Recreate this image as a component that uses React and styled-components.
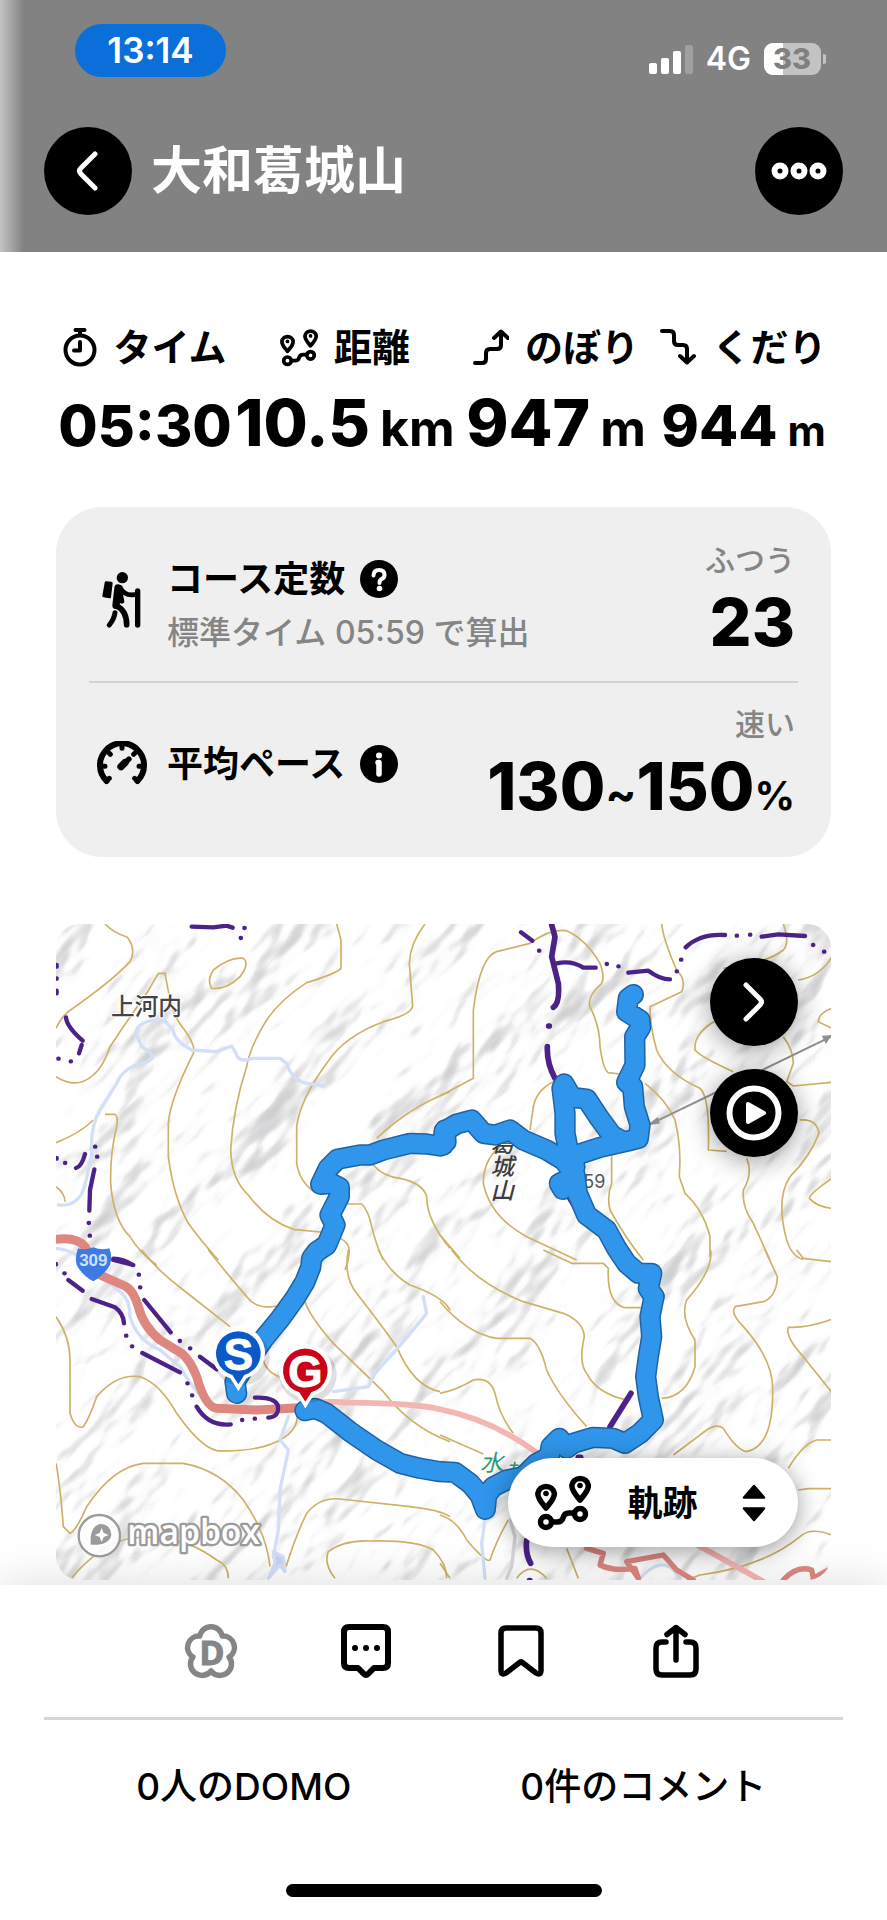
import React from "react";
import styled, { createGlobalStyle } from "styled-components";

const GlobalStyle = createGlobalStyle`
  *, *::before, *::after { box-sizing: border-box; }
  body {
    margin: 0;
    background: #fff;
    color: #000;
    font-family: Inter, "Noto Sans CJK JP", sans-serif;
  }
  button, select { font: inherit; color: inherit; border: 0; padding: 0; background: none; cursor: pointer; }
  svg { display: block; flex: none; }
`;

const Page = styled.div`
  min-height: 100vh;
  display: flex;
  flex-direction: column;
`;

/* ---------- header ---------- */

const Header = styled.header`
  padding: 24px 44px 37px;
  color: #fff;
  background: linear-gradient(90deg, #c4c4c4 0, #828282 24px);
`;

const StatusBar = styled.div`
  display: flex;
  justify-content: space-between;
  align-items: flex-start;
  padding: 0 17px 0 31px;
`;

const Clock = styled.time`
  width: 151px;
  border-radius: 27px;
  background: #0b6fd9;
  text-align: center;
  font-size: 35px;
  font-weight: 600;
  line-height: 53px;
`;

const Signals = styled.div`
  display: flex;
  align-items: center;
  gap: 13px;
  padding-top: 19px;
  font-size: 32px;
  font-weight: 600;
  line-height: 32px;
`;

const NavBar = styled.nav`
  display: flex;
  align-items: center;
  gap: 19px;
  margin-top: 50px;
`;

const Title = styled.h1`
  flex: 1;
  margin: 0;
  font-size: 51px;
  font-weight: 700;
  line-height: 64px;
`;

const RoundButton = styled.button`
  display: grid;
  place-items: center;
  width: 88px;
  height: 88px;
  border-radius: 50%;
  background: #000;
  box-shadow: ${(p) => (p.$raised ? "0 4px 26px rgba(0, 0, 0, 0.4)" : "none")};
`;

/* ---------- totals ---------- */

const Totals = styled.dl`
  display: grid;
  grid-template-columns: 178fr 222fr 200fr 175fr;
  margin: 0 56px;
  padding: 75px 0 52px;
`;

const Total = styled.div`
  display: flex;
  flex-direction: column;
  align-items: center;
  gap: 24px;
  min-width: 0;
  white-space: nowrap;
`;

const TotalLabel = styled.dt`
  display: flex;
  align-items: center;
  gap: 16px;
  font-size: 38px;
  font-weight: 700;
  line-height: 40px;
`;

const TotalValue = styled.dd`
  margin: 0;
  font-size: 64px;
  font-weight: 800;
  line-height: 64px;
`;

const Figure = styled.span`
  font-size: ${(p) => (p.$small ? 57 : 64)}px;
  line-height: 1;
`;

const Unit = styled.span`
  margin-left: 10px;
  font-size: ${(p) => (p.$small ? 42 : 50)}px;
  font-weight: 700;
  line-height: 1;
`;

/* ---------- rating card ---------- */

const Card = styled.section`
  margin: 0 56px;
  padding: 12px 33px;
  border-radius: 46px;
  background: #efefef;
`;

const Rating = styled.div`
  display: flex;
  align-items: center;
  min-height: 162px;
  & + & { border-top: 2px solid #d2d2d2; min-height: 164px; }
`;

const RatingIcon = styled.div`
  display: grid;
  place-items: center;
  width: 66px;
  margin-right: 12px;
`;

const RatingText = styled.div`
  flex: 1;
  padding-top: ${(p) => (p.$lower ? 12 : 0)}px;
`;

const RatingTitle = styled.h2`
  display: flex;
  align-items: center;
  gap: 15px;
  margin: 0;
  font-size: 36px;
  font-weight: 700;
  line-height: 44px;
`;

const HelpButton = styled.button`
  display: block;
  border-radius: 50%;
`;

const RatingNote = styled.p`
  margin: 10px 0 0;
  color: #858585;
  font-size: 32px;
  font-weight: 500;
  line-height: 44px;
`;

const RatingScore = styled.div`
  display: flex;
  flex-direction: column;
  align-items: flex-end;
  gap: 10px;
  padding: 0 3px 6px 0;
`;

const Grade = styled.span`
  color: #858585;
  font-size: 30px;
  font-weight: 500;
  line-height: 40px;
`;

const Score = styled.strong`
  font-size: 66px;
  font-weight: 800;
  line-height: 64px;
`;

const Small = styled.span`
  font-size: ${(p) => p.$size}px;
  font-weight: 700;
  line-height: 1;
`;

/* ---------- map ---------- */

const MapFrame = styled.section`
  position: relative;
  margin: 67px 56px 5px;
  border-radius: 24px;
  overflow: hidden;
`;

const MapDrawing = styled.svg`
  width: 100%;
  height: auto;
`;

const MapButtons = styled.div`
  position: absolute;
  top: 34px;
  right: 33px;
  display: grid;
  gap: 23px;
  color: #fff;
`;

const LayerPicker = styled.label`
  position: absolute;
  right: 33px;
  bottom: 33px;
  display: flex;
  align-items: center;
  justify-content: space-between;
  width: 290px;
  height: 89px;
  padding: 0 32px 0 27px;
  border-radius: 45px;
  background: #fff;
  box-shadow: 0 4px 24px rgba(0, 0, 0, 0.4);
`;

const LayerSelect = styled.select`
  appearance: none;
  width: 78px;
  height: 60px;
  font-size: 35px;
  font-weight: 700;
  line-height: 60px;
`;

/* ---------- bottom dock ---------- */

const Dock = styled.footer`
  position: relative;
  flex: 1;
  background: #fff;
  box-shadow: 0 0 44px rgba(0, 0, 0, 0.14);
`;

const Actions = styled.div`
  display: grid;
  grid-template-columns: repeat(4, 1fr);
  padding: 0 15%;
`;

const Action = styled.button`
  display: grid;
  place-items: center;
  height: 132px;
`;

const Counts = styled.div`
  display: grid;
  grid-template-columns: 1fr 1fr;
  margin: 0 44px;
  border-top: 3px solid #d6d6d6;
`;

const Count = styled.button`
  height: 134px;
  font-size: 37px;
  font-weight: 500;
  line-height: 40px;
`;

const HomeBar = styled.div`
  width: 316px;
  height: 13px;
  margin: 30px auto 22px;
  border-radius: 7px;
  background: #000;
`;

/* ---------- icons ---------- */

const SignalIcon = () => (
  <svg width="44" height="29" viewBox="0 0 44 29" fill="#fff">
    <rect x="0" y="18" width="8" height="11" rx="2" />
    <rect x="12" y="13" width="8" height="16" rx="2" />
    <rect x="24" y="6" width="8" height="23" rx="2" />
    <rect x="36" y="0" width="8" height="29" rx="2" fill="#a0a0a0" />
  </svg>
);

const BatteryIcon = () => (
  <svg width="62" height="32" viewBox="0 0 62 32">
    <rect x="0" y="0" width="57" height="32" rx="9" fill="#c3c3c3" />
    <path d="M9 0H19V32H9A9 9 0 0 1 0 23V9A9 9 0 0 1 9 0Z" fill="#fff" />
    <path d="M59 11A5 5 0 0 1 59 21Z" fill="#c3c3c3" />
    <text x="28" y="26" textAnchor="middle" fill="#808080" fontSize="29" fontWeight="800">33</text>
  </svg>
);

const ChevronIcon = ({ left }) => (
  <svg width="24" height="42" viewBox="0 0 24 42" fill="none" stroke="#fff" strokeWidth="5" strokeLinecap="round" strokeLinejoin="round">
    <path d={left ? "M19 4L5 18Q2 21 5 24L19 38" : "M4 4L18 18Q21 21 18 24L4 38"} />
  </svg>
);

const MoreIcon = () => (
  <svg width="56" height="18" viewBox="0 0 56 18" fill="none" stroke="#fff" strokeWidth="6">
    <circle cx="9" cy="9" r="5.5" />
    <circle cx="28" cy="9" r="5.5" />
    <circle cx="47" cy="9" r="5.5" />
  </svg>
);

const PlayIcon = () => (
  <svg width="56" height="56" viewBox="0 0 56 56">
    <circle cx="28" cy="28" r="24.5" fill="none" stroke="#fff" strokeWidth="6" />
    <path d="M22 19V37L38 28Z" fill="#fff" stroke="#fff" strokeWidth="4" strokeLinejoin="round" />
  </svg>
);

const TimerIcon = () => (
  <svg width="34" height="40" viewBox="0 0 34 40" fill="none" stroke="#000" strokeWidth="4" strokeLinecap="round" strokeLinejoin="round">
    <circle cx="17" cy="23" r="14.5" />
    <path d="M12.500 3H21.500M17 3V8M17 15V23.500H11" />
  </svg>
);

const RouteIcon = ({ width = 38, height = 39 }) => (
  <svg width={width} height={height} viewBox="0 0 56 57" fill="none" stroke="#000" strokeWidth="5.500" strokeLinejoin="round">
    <path d="M11 34C7 29 2.800 25 2.800 19.500A8.400 8.400 0 0 1 19.400 19.500C19.400 25 15 29 11 34Z" />
    <path d="M45 26C41 21 36.800 17 36.800 11.500A8.400 8.400 0 0 1 53.400 11.500C53.400 17 49 21 45 26Z" />
    <circle cx="11" cy="48" r="5.500" />
    <circle cx="45" cy="40" r="5.500" />
    <path d="M17 48H22Q27 48 28 44Q29 39 34 39H39" />
    <circle cx="11" cy="19.500" r="2.800" fill="#000" stroke="none" />
    <circle cx="45" cy="11.500" r="2.800" fill="#000" stroke="none" />
  </svg>
);

const AscentIcon = () => (
  <svg width="36" height="36" viewBox="0 0 36 36" fill="none" stroke="#000" strokeWidth="4" strokeLinecap="round" strokeLinejoin="round">
    <path d="M2 34H9Q13 34 13 30V24Q13 20 17 20H24Q28 20 28 16V3M21 9L28 2.500L35 9" />
  </svg>
);

const DescentIcon = () => (
  <svg width="36" height="36" viewBox="0 0 36 36" fill="none" stroke="#000" strokeWidth="4" strokeLinecap="round" strokeLinejoin="round">
    <path d="M2 2H10Q14 2 14 6V12Q14 16 18 16H23Q27 16 27 20V33M20 27L27 33.500L34 27" />
  </svg>
);

const HikerIcon = () => (
  <svg width="40" height="56" viewBox="0 0 120 168" stroke="#000" strokeLinecap="round" strokeLinejoin="round" fill="none">
    <circle cx="61" cy="17" r="17" fill="#000" stroke="none" />
    <path d="M12 32L28 33L23 75L5 72Z" fill="#000" strokeWidth="8" />
    <path d="M48 48L42 100" strokeWidth="22" />
    <path d="M52 48L60 88" strokeWidth="14" />
    <path d="M55 46Q66 72 97 68" strokeWidth="14" />
    <path d="M44 102Q74 116 74 158" strokeWidth="17" />
    <path d="M39 122Q36 142 22 159" strokeWidth="15" />
    <path d="M107 57V159" strokeWidth="16" />
  </svg>
);

const GaugeIcon = () => (
  <svg width="50" height="46" viewBox="0 0 150 138" stroke="#000" strokeLinecap="round" fill="none">
    <path d="M29 120A66 66 0 1 1 121 120" strokeWidth="18" strokeLinejoin="round" />
    <path d="M29 120L37 112M121 120L113 112M14 76H24M126 76H136M36 36L40 40M75 14V22M114 36L110 40" strokeWidth="15" />
    <path d="M73 76L96 54" strokeWidth="16" />
    <path d="M72 77L84 65" strokeWidth="22" />
  </svg>
);

const QuestionIcon = () => (
  <svg width="38" height="38" viewBox="0 0 38 38">
    <circle cx="19" cy="19" r="19" />
    <path d="M13.500 15.500Q13.500 10 19 10Q24.500 10 24.500 15Q24.500 18 21.500 19Q19.500 20 19.500 23" fill="none" stroke="#fff" strokeWidth="4" strokeLinecap="round" strokeLinejoin="round" />
    <circle cx="19.500" cy="28.500" r="2.800" fill="#fff" />
  </svg>
);

const InfoIcon = () => (
  <svg width="38" height="38" viewBox="0 0 38 38">
    <circle cx="19" cy="19" r="19" />
    <circle cx="19" cy="10.500" r="3" fill="#fff" />
    <path d="M18 17.500H19V29" fill="none" stroke="#fff" strokeWidth="5.500" strokeLinecap="round" strokeLinejoin="round" />
  </svg>
);

const SortIcon = () => (
  <svg width="24" height="38" viewBox="0 0 24 38" stroke="#000" strokeWidth="2.500" strokeLinejoin="round">
    <path d="M12 2L22 13.500H2ZM12 36L22 24.500H2Z" />
  </svg>
);

const DomoIcon = () => (
  <svg width="56" height="56" viewBox="0 0 56 56">
    <path
      d="M16.800 13A11.400 11.400 0 0 1 39.200 13A11.400 11.400 0 0 1 46.100 34A11.400 11.400 0 0 1 28 48A11.400 11.400 0 0 1 9.900 34A11.400 11.400 0 0 1 16.800 13Z"
      fill="none" stroke="#858585" strokeWidth="5.500" strokeLinejoin="round"
    />
    <text x="29" y="42" textAnchor="middle" fill="#858585" stroke="#858585" fontSize="34" fontWeight="700" fontFamily="'Noto Sans', sans-serif">D</text>
  </svg>
);

const CommentIcon = () => (
  <svg width="50" height="54" viewBox="0 0 50 54" fill="none" stroke="#000" strokeWidth="6" strokeLinejoin="round">
    <path d="M8 3H42Q47 3 47 8V39Q47 44 42 44H33L27 50Q25 52 23 50L17 44H8Q3 44 3 39V8Q3 3 8 3Z" />
    <g fill="#000" stroke="none">
      <circle cx="14" cy="24" r="3" />
      <circle cx="25" cy="24" r="3" />
      <circle cx="36" cy="24" r="3" />
    </g>
  </svg>
);

const BookmarkIcon = () => (
  <svg width="46" height="52" viewBox="0 0 46 52" fill="none" stroke="#000" strokeWidth="5.500" strokeLinejoin="round">
    <path d="M8 3H38Q43 3 43 8V45Q43 51 38 48L25 38Q23 36 21 38L8 48Q3 51 3 45V8Q3 3 8 3Z" />
  </svg>
);

const ShareIcon = () => (
  <svg width="46" height="54" viewBox="0 0 46 54" fill="none" stroke="#000" strokeWidth="5.500" strokeLinecap="round" strokeLinejoin="round">
    <path d="M13 18H9Q3 18 3 24V45Q3 51 9 51H37Q43 51 43 45V24Q43 18 37 18H33M23 36V4M14 10.500L23 3.500L32 10.500" />
  </svg>
);

/* ---------- map artwork ---------- */

/* The map is drawn in units of a third of a pixel, split in four quarters. */
const QUARTERS = { nw: "translate(0 0)", ne: "translate(1170 0)", sw: "translate(0 990)", se: "translate(1170 990)" };
const Quarter = ({ at, children }) => <g transform={QUARTERS[at]}>{children}</g>;

const Relief = () => (
  <>
    <filter id="relief" x="0" y="0" width="100%" height="100%" colorInterpolationFilters="sRGB">
      <feTurbulence type="fractalNoise" baseFrequency="0.0022 0.0042" numOctaves="4" seed="11" />
      <feDiffuseLighting surfaceScale="62" diffuseConstant="1.200" lightingColor="#fff">
        <feDistantLight azimuth="265" elevation="55" />
      </feDiffuseLighting>
      <feComponentTransfer>
        <feFuncR type="table" tableValues="0.800 0.810 0.830 0.870 0.920 0.985 1" />
        <feFuncG type="table" tableValues="0.800 0.810 0.830 0.870 0.920 0.985 1" />
        <feFuncB type="table" tableValues="0.810 0.820 0.840 0.875 0.925 0.985 1" />
      </feComponentTransfer>
    </filter>
    <rect x="18" y="12" width="2325" height="1968" fill="#fdfdfd" />
    <g transform="rotate(-48 1180 996)">
      <rect x="-500" y="-600" width="3400" height="3200" filter="url(#relief)" />
    </g>
  </>
);

const Contours = () => (
  <g fill="none" stroke="#cdb166" strokeWidth="5" strokeLinejoin="round">
    <Quarter at="nw">
      <path d="M165 12Q190 38 232 52Q260 90 240 125Q190 180 55 275Q35 290 18 325" />
      <path d="M18 470Q80 510 130 465Q160 440 180 380Q240 290 290 220L325 160H345L358 230Q370 290 400 325Q440 380 430 400Q360 540 355 610V710Q370 830 415 910Q450 960 505 1020" />
      <path d="M485 205Q470 180 490 150Q540 110 580 115Q600 130 570 170Q530 210 485 205Z" />
      <path d="M860 12L873 60V145Q860 160 770 188Q690 240 650 300Q600 380 590 440Q550 560 542 690Q545 780 595 825Q650 900 730 928L810 936Q890 950 897 985Q900 1010 885 1050" />
      <path d="M1125 12Q1080 70 1078 130L1088 260Q1080 285 1000 305Q880 350 830 430Q750 540 740 620V730Q750 790 800 820" />
      <path d="M18 668Q90 640 130 600M165 583H195Q205 590 200 620Q180 700 182 790Q190 900 240 950Q270 1000 320 1035" />
      <path d="M1200 515Q1080 560 980 655M970 735Q1000 770 1050 775Q1120 790 1130 830Q1130 900 1200 985M885 852H935Q955 870 965 920Q980 980 1000 1020M18 800Q45 820 45 845" />
    </Quarter>
    <Quarter at="ne">
      <path d="M0 528L100 475V270Q120 110 170 95L270 70Q330 25 380 32Q440 60 480 130Q495 170 485 190Q440 230 450 260Q480 320 480 380Q490 450 505 458L540 462M340 485Q290 510 280 560L270 630" />
      <path d="M665 12Q670 60 710 150Q740 180 725 215L630 260Q630 320 650 390Q680 460 780 505Q810 530 805 690L860 694" />
      <path d="M615 490Q680 540 705 600Q725 680 718 770L735 820Q790 870 810 950V1010" />
      <path d="M1030 12Q1050 70 1030 90Q980 130 850 145M1075 180Q1140 170 1176 110M830 300Q760 340 765 390Q780 410 880 455M1030 350Q1060 390 1060 430L1040 485L1060 498L1176 487M1080 600Q1130 595 1137 640Q1110 710 1050 770Q1010 830 1035 940Q1050 1010 1090 1018M1176 265Q1135 280 1135 305L1176 325M1176 775Q1110 820 1108 835Q1130 860 1176 865M920 715Q940 760 910 810Q905 860 940 910L990 1020" />
      <path d="M180 680Q130 720 130 790Q150 890 260 950L410 1020M515 705V790Q500 830 510 870Q560 960 610 1020M0 945L60 1015" />
    </Quarter>
    <Quarter at="sw">
      <path d="M275 0Q320 60 400 120L540 230M475 0Q530 70 590 140Q620 180 680 168M640 330Q650 370 700 385M895 0Q880 80 920 130Q990 220 1040 290Q1090 410 1170 425M985 0Q1020 70 1080 105Q1180 140 1200 180M765 155Q780 200 850 280L1000 425Q1080 530 1200 575" />
      <path d="M18 200Q60 260 60 330V490Q75 540 100 530Q120 500 140 440Q200 370 270 380Q330 400 380 490Q450 590 500 602Q580 605 640 590Q740 560 742 500" />
      <path d="M18 640Q30 700 40 830L60 850Q80 840 110 770Q190 650 280 640H400Q510 660 580 750Q650 850 660 950M65 985Q100 940 150 905Q220 850 330 865Q420 870 500 930Q535 945 535 985M708 950Q740 850 770 790Q810 740 870 747L1080 770Q1170 780 1200 800M855 985Q820 940 835 905Q880 870 960 873Q1100 870 1150 900Q1190 940 1190 985" />
    </Quarter>
    <Quarter at="se">
      <path d="M35 0Q110 100 250 155L370 190Q430 215 433 260Q415 340 440 370Q470 430 560 450M665 445Q740 440 765 350V270Q720 200 740 150Q820 60 812 0M310 0L395 40H490L505 55Q500 160 555 173H605M0 155Q80 250 170 265H270Q300 280 320 360Q350 430 440 530M0 430Q50 420 100 390Q150 380 165 430Q180 500 220 550M0 555L130 612" />
      <path d="M975 0L1012 80Q1010 140 970 155L885 170Q870 190 910 230Q1000 330 998 420Q1000 590 920 605Q890 600 850 535Q830 520 800 540L700 615M1045 655Q1090 580 1130 570H1176M1070 0L1090 25L1176 35M1176 208Q1100 235 1045 232Q1035 260 1090 320L1176 428M1075 720L1105 716H1176M1176 855Q1110 830 1080 860Q970 950 780 975L740 990" />
      <path d="M0 795Q50 810 80 870Q140 940 150 930Q170 870 205 810M230 985Q270 930 320 985M380 895L415 985M0 940L30 985" />
    </Quarter>
  </g>
);

const Water = () => (
  <g fill="none" stroke="#d3dff6" strokeWidth="10" strokeLinecap="round" strokeLinejoin="round">
    <path d="M820 498L760 488Q720 470 710 430L690 415H610Q565 430 558 400L545 378L500 395L425 390Q370 360 370 330L340 298Q260 300 258 340L275 380Q330 410 290 425Q220 440 200 490L150 570Q120 620 125 700Q110 780 100 810Q80 860 25 855" />
    <Quarter at="sw">
      <path d="M18 -5Q80 0 130 60L215 130Q240 150 240 200Q260 270 330 300L390 350Q440 440 500 472M1120 140L1130 190L1060 275L975 370L955 410L850 425M715 500L690 570L715 600L690 720L685 840L670 920" />
      <path d="M670 905L700 920L705 965L690 945L655 985L675 940Z" fill="#c5d1f4" />
    </Quarter>
    <Quarter at="se">
      <path d="M135 810L125 880L135 985M600 985Q660 920 700 960L720 985" />
      <path d="M210 810L225 860L215 950L200 985" stroke="#d5d5da" />
    </Quarter>
  </g>
);

const Roads = () => (
  <g fill="none" strokeLinecap="round" strokeLinejoin="round">
    <g stroke="#f4b6b2" strokeWidth="17">
      <path d="M745 1460Q800 1440 900 1448Q1100 1450 1170 1468Q1330 1500 1470 1605L1960 1885Q2060 1940 2140 1985" />
    </g>
    <g stroke="#dd877f" strokeWidth="27">
      <path d="M18 958Q80 950 105 980L150 1065L225 1098Q250 1110 265 1160Q280 1220 330 1260L395 1300Q420 1320 440 1370Q465 1460 500 1465L620 1470L750 1463" />
      <Quarter at="se">
        <path d="M440 895L490 910L480 945Q520 965 585 955L595 985L560 935L670 915L710 960L760 990M1030 990Q1070 945 1115 960L1120 985L1165 960" strokeWidth="16" />
      </Quarter>
    </g>
  </g>
);

const Borders = () => (
  <g fill="none" stroke="#4c2188" strokeWidth="13" strokeLinecap="round" strokeLinejoin="round">
    <Quarter at="nw">
      <path d="M425 20L490 22L530 17L548 23M583 24H584M572 54H573M48 292Q50 320 98 362M95 375L87 400M25 416H26M62 424H63M20 135V140M20 175V176M20 212V220M135 680H136M141 710H142M105 702Q95 740 78 744M133 748L120 810L118 872M116 909H117M119 947H120M45 729H46M20 714V716M190 1020L250 1035" />
    </Quarter>
    <Quarter at="ne">
      <path d="M243 37L277 62M297 92H298M350 130Q395 120 430 143H467M500 132H501M535 139H536M565 158L625 152Q660 178 690 178M710 154H711M723 119H724M737 82Q780 40 855 45M890 47H891M930 44H931M965 50L1015 43L1095 48M1119 75H1120M1152 95H1153" />
      <path d="M335 14L345 50L335 110L355 190Q360 250 340 262M326 318H328M322 380Q320 430 345 475M380 820L430 900" strokeWidth="17" />
    </Quarter>
    <Quarter at="sw">
      <path d="M18 42V43M43 70H44M55 90L98 122M125 147L195 172Q220 190 222 220M228 257H229M246 289H247M277 309L390 367M412 400H413M426 436H427M440 470Q475 530 542 523M576 510H577M614 506H615M655 503Q690 500 683 465Q670 440 615 443M266 74H267M270 112H271M283 150L362 247M389 273H390M420 295H421M450 320L500 358M190 26Q220 26 248 45" />
    </Quarter>
    <Quarter at="se">
      <path d="M573 430L510 530M415 622H422M260 870Q255 910 272 940M268 992H270" strokeWidth="17" />
    </Quarter>
  </g>
);

const Ropeway = () => (
  <g stroke="#8f8f8f" strokeWidth="6" fill="#8f8f8f">
    <path d="M1810 608L2343 350" />
    <path d="M1800 612L1822 596L1826 608ZM2320 350L2340 348L2328 366Z" />
  </g>
);

const trackParts = [
  ["sw", "M560 430L555 395L590 340L640 268L690 207L735 145L765 95L782 52L785 25L800 5L830 -15L855 -75L840 -105L868 -160L868 -188L845 -200L812 -197L835 -245L862 -272L930 -285L960 -285L1000 -300L1080 -320L1130 -318L1170 -312L1188 -325L1185 -360"],
  ["ne", "M10 675L12 635L50 612L95 600L130 640L165 645L210 630L250 660L320 690L370 720L405 765L412 820L440 885L500 930L530 985L560 1030L595 1060L635 1060L625 1105L642 1130"],
  ["ne", "M405 770L358 790L368 808M405 740L385 690L375 640L375 580L366 505L372 492L395 532L440 537L475 590L515 645L545 662"],
  ["ne", "M410 705L480 682L560 664L595 655L600 615L583 560L578 500L560 487L585 435L584 350L602 322L600 300L560 275L565 235L580 224"],
  ["se", "M642 140L630 200L635 260L625 320L617 380L625 440L640 510L600 550L555 580L520 565L460 562L400 580L380 595L358 565L333 590L328 620L290 640L250 680L200 690L160 710L140 735L136 778L120 735L90 700L45 667L0 665L-60 655L-120 640L-190 600L-270 545L-340 490L-375 475L-405 482"],
];

const Track = ({ color, width }) => (
  <g fill="none" stroke={color} strokeWidth={width} strokeLinecap="round" strokeLinejoin="round">
    {trackParts.map(([at, d]) => (
      <Quarter at={at} key={d}>
        <path d={d} />
      </Quarter>
    ))}
  </g>
);

const Pin = ({ x, y, color, letter }) => (
  <g transform={`translate(${x} ${y})`}>
    <ellipse cx="8" cy="12" rx="86" ry="84" fill="#000" opacity="0.120" />
    <path d="M0 112L-24 74A80 80 0 1 1 24 74Z" fill="#fff" />
    <path d="M0 92L-18 64A67 67 0 1 1 18 64Z" fill={color} />
    <path d="M0 112L-18 78L0 92L18 78Z" fill="#fff" />
    <text x="0" y="48" textAnchor="middle" fill="#fff" stroke="#fff" strokeWidth="3" fontSize="132" fontWeight="700" fontFamily="'Liberation Sans', sans-serif">{letter}</text>
  </g>
);

const MapArt = () => (
  <MapDrawing viewBox="18 12 2325 1968" role="img" aria-label="活動マップ">
    <Relief />
    <Contours />
    <Water />
    <Roads />
    <Borders />
    <Ropeway />

    <text x="183" y="285" fontSize="71" fontWeight="500" fill="#444" stroke="#fff" strokeWidth="6" paintOrder="stroke">上河内</text>
    <text x="1352" y="634" writingMode="vertical-rl" fontSize="70" fontWeight="500" fontStyle="italic" fill="#3c3c3c">葛城山</text>
    <text x="1600" y="805" fontSize="54" fill="#555">59</text>
    <g fontSize="69" fontStyle="italic" fill="#2c9a72">
      <text x="1290" y="1652">水</text>
      <text x="1362" y="1682">越</text>
    </g>

    <path d="M84 985Q105 992 130 982Q155 992 178 985Q188 1010 180 1035Q160 1068 130 1084Q98 1068 80 1035Q74 1010 84 985Z" fill="#3d7be3" />
    <text x="130" y="1039" textAnchor="middle" fontSize="51" fontWeight="600" fontFamily="'Liberation Sans', sans-serif" fill="#cfe0ff">309</text>

    <Track color="#1f62a3" width="64" />
    <Track color="#2f96ec" width="55" />

    <Pin x={565} y={1301} color="#0b58c8" letter="S" />
    <Pin x={766} y={1353} color="#cb0519" letter="G" />

    <g>
      <circle cx="148" cy="1847" r="62" fill="#fff" fillOpacity="0.900" stroke="#9b9b9b" strokeWidth="7" />
      <path d="M122 1874Q118 1820 150 1812Q182 1812 184 1844Q180 1876 122 1874Z" fill="#9b9b9b" />
      <path d="M155 1824L161 1839L176 1845L161 1851L155 1866L149 1851L134 1845L149 1839Z" fill="#fff" />
      <text x="232" y="1873" fontSize="101" fontWeight="600" fontFamily="'Open Sans', sans-serif" fill="#fff" stroke="#9b9b9b" strokeWidth="14" strokeLinejoin="round" paintOrder="stroke">mapbox</text>
    </g>
  </MapDrawing>
);

/* ---------- page ---------- */

const totals = [
  { label: "タイム", icon: <TimerIcon />, value: "05:30", small: true },
  { label: "距離", icon: <RouteIcon />, value: "10.5", unit: "km" },
  { label: "のぼり", icon: <AscentIcon />, value: "947", unit: "m" },
  { label: "くだり", icon: <DescentIcon />, value: "944", unit: "m", small: true },
];

export default function App() {
  return (
    <Page>
      <GlobalStyle />
      <Header>
        <StatusBar>
          <Clock>13:14</Clock>
          <Signals>
            <SignalIcon />
            <span>4G</span>
            <BatteryIcon />
          </Signals>
        </StatusBar>
        <NavBar>
          <RoundButton type="button" aria-label="戻る"><ChevronIcon left /></RoundButton>
          <Title>大和葛城山</Title>
          <RoundButton type="button" aria-label="メニュー"><MoreIcon /></RoundButton>
        </NavBar>
      </Header>

      <main>
        <Totals>
          {totals.map((t) => (
            <Total key={t.label}>
              <TotalLabel>{t.icon}{t.label}</TotalLabel>
              <TotalValue>
                <Figure $small={t.small}>{t.value}</Figure>
                {t.unit && <Unit $small={t.small}>{t.unit}</Unit>}
              </TotalValue>
            </Total>
          ))}
        </Totals>

        <Card>
          <Rating>
            <RatingIcon><HikerIcon /></RatingIcon>
            <RatingText $lower>
              <RatingTitle>
                コース定数
                <HelpButton type="button" aria-label="コース定数とは"><QuestionIcon /></HelpButton>
              </RatingTitle>
              <RatingNote>標準タイム 05:59 で算出</RatingNote>
            </RatingText>
            <RatingScore>
              <Grade>ふつう</Grade>
              <Score>23</Score>
            </RatingScore>
          </Rating>
          <Rating>
            <RatingIcon><GaugeIcon /></RatingIcon>
            <RatingText>
              <RatingTitle>
                平均ペース
                <HelpButton type="button" aria-label="平均ペースとは"><InfoIcon /></HelpButton>
              </RatingTitle>
            </RatingText>
            <RatingScore>
              <Grade>速い</Grade>
              <Score>130<Small $size={46}>~</Small>150<Small $size={40}>%</Small></Score>
            </RatingScore>
          </Rating>
        </Card>

        <MapFrame>
          <MapArt />
          <MapButtons>
            <RoundButton type="button" $raised aria-label="地図を開く"><ChevronIcon /></RoundButton>
            <RoundButton type="button" $raised aria-label="再生"><PlayIcon /></RoundButton>
          </MapButtons>
          <LayerPicker>
            <RouteIcon width={56} height={57} />
            <LayerSelect aria-label="表示" defaultValue="track">
              <option value="track">軌跡</option>
            </LayerSelect>
            <SortIcon />
          </LayerPicker>
        </MapFrame>
      </main>

      <Dock>
        <Actions>
          <Action type="button" aria-label="DOMOを送る"><DomoIcon /></Action>
          <Action type="button" aria-label="コメント"><CommentIcon /></Action>
          <Action type="button" aria-label="保存"><BookmarkIcon /></Action>
          <Action type="button" aria-label="共有"><ShareIcon /></Action>
        </Actions>
        <Counts>
          <Count type="button">0人のDOMO</Count>
          <Count type="button">0件のコメント</Count>
        </Counts>
        <HomeBar />
      </Dock>
    </Page>
  );
}
